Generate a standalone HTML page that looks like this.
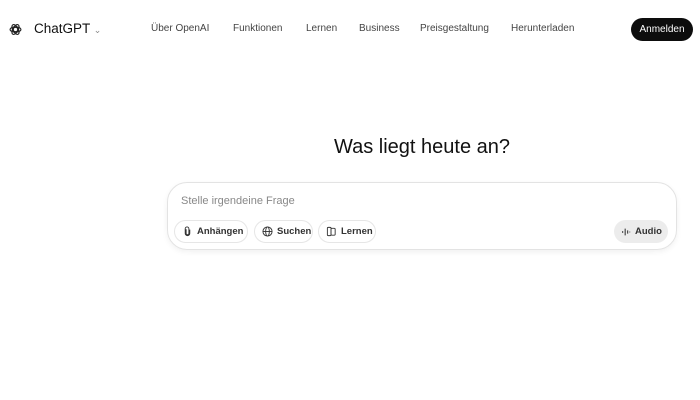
<!DOCTYPE html>
<html><head><meta charset="utf-8"><style>
*{margin:0;padding:0;box-sizing:border-box}
body{width:700px;height:400px;background:#fff;font-family:"Liberation Sans","DejaVu Sans",sans-serif;color:#0d0d0d;position:relative;overflow:hidden}
.a{position:absolute;white-space:nowrap}
.nav{font-size:10px;color:#444;top:23px}
.btn{position:absolute;top:220px;height:23px;border:1px solid #e6e6e6;border-radius:12px;font-size:9.5px;font-weight:bold;color:#333;display:flex;align-items:center;padding-left:7px;gap:4px}
</style></head><body>
<svg class="a" style="left:9px;top:23px" width="13" height="13" viewBox="0 0 24 24" fill="none" stroke="#222" stroke-width="2">
<circle cx="12" cy="12" r="4"/><ellipse cx="12" cy="12" rx="10" ry="5"/><ellipse cx="12" cy="12" rx="10" ry="5" transform="rotate(60 12 12)"/><ellipse cx="12" cy="12" rx="10" ry="5" transform="rotate(120 12 12)"/></svg>
<div class="a" style="left:34px;top:21px;font-size:13.5px;color:#111">ChatGPT <span style="font-size:9px;color:#888">&#8964;</span></div>
<div class="a nav" style="left:151px">Über OpenAI</div>
<div class="a nav" style="left:233px">Funktionen</div>
<div class="a nav" style="left:306px">Lernen</div>
<div class="a nav" style="left:359px">Business</div>
<div class="a nav" style="left:420px">Preisgestaltung</div>
<div class="a nav" style="left:511px">Herunterladen</div>
<div class="a" style="left:631px;top:18px;width:62px;height:23px;background:#0d0d0d;color:#fff;border-radius:12px;font-size:10px;display:flex;align-items:center;justify-content:center">Anmelden</div>
<div class="a" style="left:0;width:844px;top:136px;text-align:center;font-size:20px;color:#111">Was liegt heute an?</div>
<div class="a" style="left:167px;top:182px;width:510px;height:68px;border:1px solid #e3e3e3;border-radius:20px;box-shadow:0 2px 6px rgba(0,0,0,.06)"></div>
<div class="a" style="left:181px;top:195px;font-size:11px;color:#888">Stelle irgendeine Frage</div>
<div class="btn" style="left:174px;width:74px"><svg width="11" height="11" viewBox="0 0 24 24" fill="none" stroke="#333" stroke-width="2"><path d="M9 7v9a3 3 0 0 0 6 0V6a4 4 0 0 0-8 0v10a5 5 0 0 0 10 0V8"/></svg>Anhängen</div>
<div class="btn" style="left:254px;width:59px"><svg width="11" height="11" viewBox="0 0 24 24" fill="none" stroke="#333" stroke-width="2"><circle cx="12" cy="12" r="10"/><ellipse cx="12" cy="12" rx="4" ry="10"/><path d="M2 12h20"/></svg>Suchen</div>
<div class="btn" style="left:318px;width:58px"><svg width="11" height="11" viewBox="0 0 24 24" fill="none" stroke="#333" stroke-width="2"><rect x="3" y="3" width="8" height="18" rx="2"/><rect x="11" y="5" width="9" height="15" rx="2"/></svg>Lernen</div>
<div class="btn" style="left:614px;width:54px;border:none;background:#ececec"><svg width="10" height="10" viewBox="0 0 24 24" stroke="#333" stroke-width="2.5"><path d="M4 10v4M10 4v16M16 8v8M21 11v2"/></svg>Audio</div>
</body></html>
